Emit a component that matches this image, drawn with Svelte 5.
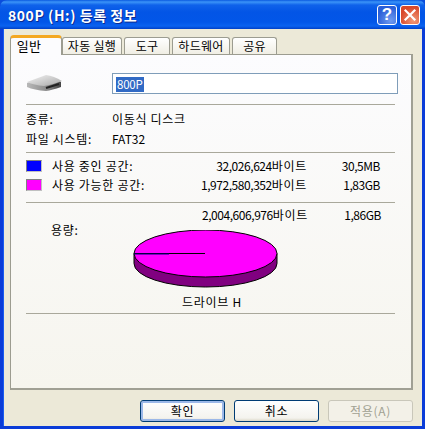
<script>
  const tabs = [
    { label: '자동 실행', w: 60 },
    { label: '도구', w: 46 },
    { label: '하드웨어', w: 58 },
    { label: '공유', w: 45 }
  ];
</script>

<div class="window">
  <header class="titlebar">
    <span class="title">800P (H:) 등록 정보</span>
    <div class="caps">
      <div class="cap help">?</div>
      <div class="cap close">
        <svg width="20" height="20" viewBox="0 0 20 20"><path d="M5 5 L15 15 M15 5 L5 15" stroke="#fff" stroke-width="2.4" stroke-linecap="square" /></svg>
      </div>
    </div>
  </header>
  <div class="client">
    <div class="tabs">
      <div class="tab active">일반</div>
      {#each tabs as t}
        <div class="tab" style="width:{t.w}px">{t.label}</div>
      {/each}
    </div>
    <section class="panel">
      <div class="name-row">
        <svg class="drive" width="36" height="20" viewBox="0 0 36 20">
          <defs>
            <linearGradient id="dtop" x1="0" y1="0" x2="1" y2="1"><stop offset="0" stop-color="#f4f4f4" /><stop offset="1" stop-color="#a8a8a8" /></linearGradient>
            <linearGradient id="dside" x1="0" y1="0" x2="1" y2="0"><stop offset="0" stop-color="#b8b8b8" /><stop offset="0.6" stop-color="#8a8a8a" /><stop offset="1" stop-color="#444" /></linearGradient>
          </defs>
          <path d="M1 9 L21 2 Q28 3 35 8 L35 13 Q26 16 20 17 Q8 16 1 13 Z" fill="url(#dside)" />
          <path d="M1 8 L20 1 Q28 2 36 7 Q26 11 18 12 Q8 11 1 8 Z" fill="url(#dtop)" />
          <path d="M20 14 L33 10" stroke="#222" stroke-width="2" />
        </svg>
        <div class="input"><span class="sel">800P</span></div>
      </div>
      <hr />
      <div class="info">
        <div class="ko">종류:</div><div class="ko">이동식 디스크</div>
        <div class="ko">파일 시스템:</div><div>FAT32</div>
      </div>
      <hr />
      <div class="usage">
        <i class="sw used"></i><span class="ko">사용 중인 공간:</span><span class="num"><span class="digits">32,026,624</span><span class="ko">바이트</span></span><span class="num digits">30,5MB</span>
        <i class="sw free"></i><span class="ko">사용 가능한 공간:</span><span class="num"><span class="digits">1,972,580,352</span><span class="ko">바이트</span></span><span class="num digits">1,83GB</span>
      </div>
      <hr />
      <div class="capacity">
        <span class="cap-num num"><span class="digits">2,004,606,976</span><span class="ko">바이트</span></span><span class="cap-gb num digits">1,86GB</span>
        <span class="cap-label ko">용량:</span>
        <svg class="pie" width="146" height="58" viewBox="0 0 146 58">
          <path d="M1 23.5 V33.5 A71.5 23.5 0 0 0 144 33.5 V23.5 Z" fill="#800080" stroke="#000" stroke-width="1" />
          <ellipse cx="72.5" cy="23.5" rx="71.5" ry="23.5" fill="#ff00ff" stroke="#000" stroke-width="1" />
          <path d="M1 23.5 H72" stroke="#000" stroke-width="1" />
          <path d="M1 24 H36" stroke="#000080" stroke-width="1" />
        </svg>
      </div>
      <div class="drive-label ko">드라이브 H</div>
      <hr />
    </section>
    <footer class="buttons">
      <div class="btn default">확인</div>
      <div class="btn">취소</div>
      <div class="btn disabled">적용(A)</div>
    </footer>
  </div>
</div>

<style>
  :global(body) { margin: 0; background: #0a4ddc; }
  .window {
    width: 425px; height: 429px; box-sizing: border-box; overflow: hidden;
    font: 12px/16px "Noto Sans CJK KR", "Liberation Sans", sans-serif;
    color: #000; background: #0a3cd8; display: flex; flex-direction: column;
    border-radius: 7px 7px 0 0;
  }
  .titlebar {
    height: 29px; flex: none; display: flex; align-items: center; justify-content: space-between;
    padding: 0 5px 0 8px;
    background: linear-gradient(180deg, #0a5ae0 0, #3b94f8 2px, #0f62ea 5px, #0355e6 12px, #0256e8 22px, #0a62f0 26px, #0040c8 29px);
  }
  .title { color: #fff; font-size: 14px; font-weight: 700; letter-spacing: 0.55px; text-shadow: 1px 1px 0 #0a2a90; }
  .caps { display: flex; gap: 3px; }
  .cap {
    width: 20px; height: 20px; box-sizing: border-box; border: 1px solid #fff; border-radius: 3px;
    display: flex; align-items: center; justify-content: center; color: #fff;
    font: 700 17px/1 "Liberation Sans", sans-serif;
  }
  .help { background: radial-gradient(circle at 70% 80%, #6f9bf0, #2a5fd8 70%); }
  .close { background: radial-gradient(circle at 70% 80%, #f09a78, #d9482a 70%); }
  .client {
    flex: 1; margin: 0 3px 3px 3px; background: #ece9d8; position: relative;
    padding: 6px 9px 0 6px; display: flex; flex-direction: column;
    border-left: 1px solid #1a5cf0;
  }
  .tabs { display: flex; align-items: flex-end; height: 19px; position: relative; z-index: 1; gap: 2px; }
  .tab {
    height: 17px; box-sizing: border-box; text-align: center; background: linear-gradient(#fff, #f0eee4);
    border: 1px solid #9c9c90; border-bottom: 0; border-radius: 3px 3px 0 0; line-height: 16px;
    letter-spacing: 0.3px;
  }
  .tab.active {
    width: 52px; height: 20px; margin-bottom: -1px; margin-right: -2px; background: #fcfcfe;
    border-top: 3px solid #f4a822; border-radius: 4px 4px 0 0; line-height: 15px; font-size: 13px;
    padding-right: 14px;
  }
  .panel {
    height: 336px; box-sizing: border-box; width: 403px; flex: none;
    background: linear-gradient(180deg, #fcfcfe, #f6f5ee); border: 1px solid #9c9c90;
    border-right: 2px solid #a0a094; border-bottom: 2px solid #a0a094; padding: 18px 15px 0 15px;
  }
  hr { border: 0; height: 1px; background: #a9a89b; margin: 0; width: 369px; }
  .name-row { display: flex; height: 31px; align-items: flex-start; }
  .drive { margin-top: 1px; flex: none; }
  .input {
    flex: none; margin-left: 50px; width: 286px; height: 21px; box-sizing: border-box; border: 1px solid #7f9db9;
    padding: 2px 3px; line-height: 15px; background: #fff;
  }
  .sel { background: #316ac5; color: #fff; padding: 0 1px; display: inline-block; height: 15px; font-size: 11.5px; letter-spacing: -0.2px; }
  .ko { letter-spacing: 0.7px; }
  .digits { letter-spacing: -0.45px; }
  .info { display: grid; grid-template-columns: 86px 1fr; grid-auto-rows: 20px; padding: 4px 0 3px; height: 40px; align-items: center; }
  .usage {
    display: grid; grid-template-columns: 26px 120px 135px 73px; grid-auto-rows: 19px; padding: 3px 0 0; height: 46px;
    align-items: center;
  }
  .sw { display: block; width: 16px; height: 12px; box-sizing: border-box; border-top: 1px solid #808080; border-left: 1px solid #808080; border-right: 1px solid #c0c0c0; border-bottom: 1px solid #c0c0c0; }
  .used { background: #0000ff; }
  .free { background: #ff00ff; }
  .num { text-align: right; white-space: nowrap; }
  .capacity { height: 90px; position: relative; }
  .cap-num { position: absolute; right: 88px; top: 4px; }
  .cap-gb { position: absolute; right: 15px; top: 4px; }
  .cap-label { position: absolute; left: 25px; top: 19px; }
  .pie { position: absolute; left: 107px; top: 27px; }
  .drive-label { height: 20px; line-height: 18px; text-align: center; width: 372px; }
  .buttons { display: flex; gap: 9px; margin-top: 10px; padding-left: 130px; }
  .btn {
    width: 86px; height: 22px; box-sizing: border-box; text-align: center; line-height: 20px;
    border: 1px solid #003c74; border-radius: 3px; background: linear-gradient(#fff, #f4f3ee 85%, #dcd8c8);
    letter-spacing: 0.7px;
  }
  .btn.default { box-shadow: inset 0 0 0 2px #9cb8e8; }
  .btn.disabled { border-color: #c9c7ba; color: #a1a192; background: #f3f1e8; }
</style>
